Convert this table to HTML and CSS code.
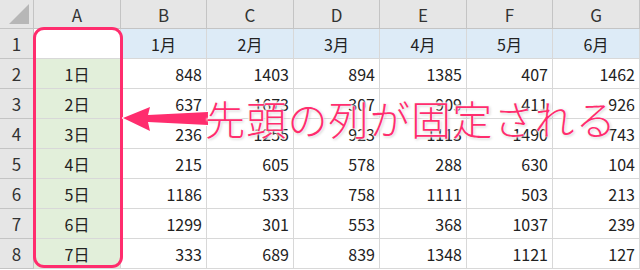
FILE: index.html
```html
<!DOCTYPE html>
<html lang="ja">
<head>
<meta charset="utf-8">
<link rel="stylesheet" href="styles.css">
</head>
<body>
<div class="sheet">
  <div class="grid">
    <div class="hd corner"><span class="tri"></span></div>
    <div class="hd col">A</div><div class="hd col">B</div><div class="hd col">C</div><div class="hd col">D</div><div class="hd col">E</div><div class="hd col">F</div><div class="hd col">G</div>

    <div class="hd rn">1</div>
    <div class="c a1"></div><div class="c m">1月</div><div class="c m">2月</div><div class="c m">3月</div><div class="c m">4月</div><div class="c m">5月</div><div class="c m">6月</div>

    <div class="hd rn">2</div>
    <div class="c d">1日</div><div class="c n">848</div><div class="c n">1403</div><div class="c n">894</div><div class="c n">1385</div><div class="c n">407</div><div class="c n">1462</div>

    <div class="hd rn">3</div>
    <div class="c d">2日</div><div class="c n">637</div><div class="c n">1673</div><div class="c n">307</div><div class="c n">909</div><div class="c n">411</div><div class="c n">926</div>

    <div class="hd rn">4</div>
    <div class="c d">3日</div><div class="c n">236</div><div class="c n">1255</div><div class="c n">923</div><div class="c n">1113</div><div class="c n">1490</div><div class="c n">743</div>

    <div class="hd rn">5</div>
    <div class="c d">4日</div><div class="c n">215</div><div class="c n">605</div><div class="c n">578</div><div class="c n">288</div><div class="c n">630</div><div class="c n">104</div>

    <div class="hd rn">6</div>
    <div class="c d">5日</div><div class="c n">1186</div><div class="c n">533</div><div class="c n">758</div><div class="c n">1111</div><div class="c n">503</div><div class="c n">213</div>

    <div class="hd rn">7</div>
    <div class="c d">6日</div><div class="c n">1299</div><div class="c n">301</div><div class="c n">553</div><div class="c n">368</div><div class="c n">1037</div><div class="c n">239</div>

    <div class="hd rn">8</div>
    <div class="c d">7日</div><div class="c n">333</div><div class="c n">689</div><div class="c n">839</div><div class="c n">1348</div><div class="c n">1121</div><div class="c n">127</div>
  </div>

  <div class="frame"></div>
  <svg class="arrow" width="100" height="40" viewBox="0 0 100 40">
    <path d="M3,18 L30,7 L28,15 L88,12 L88,25 L28,22 L30,31 Z" fill="#ff2d6e" stroke="#ffffff" stroke-width="2" stroke-linejoin="round" paint-order="stroke"/>
  </svg>
  <div class="callout">先頭の列が固定される</div>
</div>
</body>
</html>
```
FILE: styles.css
```css
html, body {
  margin: 0;
  padding: 0;
  background: #ffffff;
}
.sheet {
  position: relative;
  width: 640px;
  height: 270px;
  overflow: hidden;
  font-family: "Noto Sans CJK JP", "Noto Sans", sans-serif;
}
.grid {
  display: grid;
  grid-template-columns: 34px 87px 86px 87px 86px 87px 86px 87px;
  grid-template-rows: 29px repeat(8, 30px);
}
.hd {
  background: #e6e6e6;
  border-right: 1px solid #c4c4c4;
  border-bottom: 1px solid #c4c4c4;
  box-sizing: border-box;
  color: #333;
  font-size: 17px;
  display: flex;
  align-items: center;
  justify-content: center;
}
.corner {
  position: relative;
}
.tri {
  position: absolute;
  right: 4px;
  bottom: 4px;
  width: 0;
  height: 0;
  border-left: 20px solid transparent;
  border-bottom: 20px solid #b7b7b7;
}
.rn {
  font-size: 17px;
}
.c {
  box-sizing: border-box;
  border-right: 1px solid #d8d8d8;
  border-bottom: 1px solid #d8d8d8;
  font-size: 16px;
  color: #222;
  display: flex;
  align-items: center;
  padding: 0 4px;
}
.a1 {
  background: #ffffff;
}
.m {
  background: #ddebf7;
  justify-content: center;
}
.d {
  background: #e2efda;
  justify-content: center;
}
.n {
  justify-content: flex-end;
}
.frame {
  position: absolute;
  left: 33px;
  top: 27px;
  width: 90px;
  height: 241px;
  box-sizing: border-box;
  border: 3px solid #ff2d6e;
  border-radius: 11px;
}
.arrow {
  position: absolute;
  left: 120px;
  top: 100px;
}
.callout {
  position: absolute;
  left: 205px;
  top: 94px;
  font-size: 40px;
  font-weight: 300;
  letter-spacing: 1.2px;
  line-height: 48px;
  color: #ff2d6e;
  white-space: nowrap;
  text-shadow: 0 0 2px #fff, 0 0 3px #fff, 1px 1px 3px rgba(0,0,0,0.25), -1px -1px 2px #fff;
}
```
